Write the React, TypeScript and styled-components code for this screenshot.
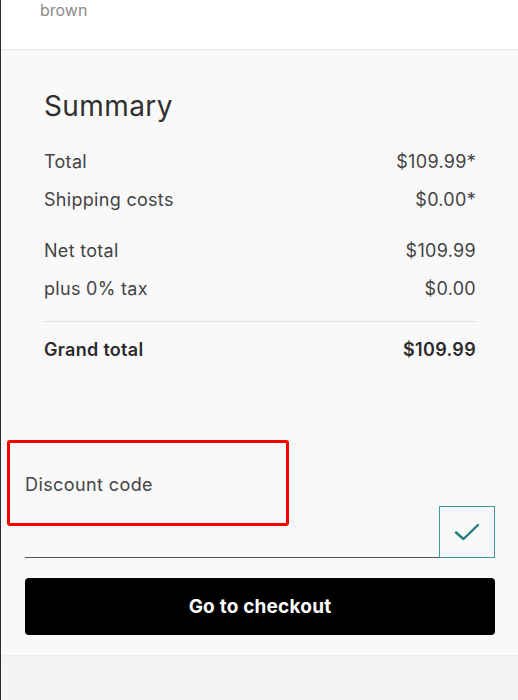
import React from 'react';
import styled, { createGlobalStyle } from 'styled-components';

const GlobalStyle = createGlobalStyle`
    html, body {
        margin: 0;
        padding: 0;
        background: #f4f4f4;
    }
    body {
        font-family: Inter, "Noto Sans", sans-serif;
        color: #333;
    }
`;

const Page = styled.div`
    width: 518px;
    min-height: 700px;
    box-sizing: border-box;
    border-left: 1px solid #2e2e2e;
    background: #f4f4f4;
`;

const ItemTail = styled.div`
    height: 49px;
    background: #fff;
    border-bottom: 1px solid #e6e6e6;
    padding-left: 39px;
    font-size: 16px;
    line-height: 20px;
    color: #8a8a8a;
`;

const Panel = styled.section`
    background: #f9f9f9;
    box-shadow: 0 1px 2px rgba(0, 0, 0, 0.05);
`;

const Summary = styled.div`
    padding: 40px 42px 0 43px;
`;

const Heading = styled.h2`
    margin: 0 0 21px;
    font-size: 28px;
    line-height: 32px;
    font-weight: 400;
    letter-spacing: 0.4px;
    color: #2f2f2f;
`;

const Group = styled.div<{ $gap?: number }>`
    margin-top: ${(p) => p.$gap ?? 0}px;
`;

const Row = styled.div<{ $bold?: boolean }>`
    display: flex;
    justify-content: space-between;
    font-size: 18px;
    line-height: 38px;
    letter-spacing: 0.3px;
    font-weight: ${(p) => (p.$bold ? 600 : 400)};
    color: ${(p) => (p.$bold ? '#2a2a2a' : '#444')};
`;

const Divider = styled.hr`
    margin: 13px 0 9px;
    border: 0;
    border-top: 1px solid #e2e2e2;
`;

const Discount = styled.div`
    position: relative;
    padding: 104px 23px 20px 24px;
`;

const Highlight = styled.div`
    position: absolute;
    left: 6px;
    top: 71px;
    width: 276px;
    height: 80px;
    border: 3px solid #f00;
    border-radius: 3px;
`;

const Label = styled.label`
    display: block;
    font-size: 18px;
    line-height: 24px;
    letter-spacing: 0.4px;
    color: #444;
    margin-bottom: 9px;
`;

const InputRow = styled.div`
    display: flex;
    height: 52px;
`;

const CodeInput = styled.input`
    flex: 1;
    min-width: 0;
    border: 0;
    border-bottom: 1.5px solid #555;
    background: transparent;
    outline: none;
    font: inherit;
`;

const ApplyButton = styled.button`
    width: 56px;
    height: 52px;
    box-sizing: border-box;
    border: 1.5px solid #3a9b96;
    background: transparent;
    display: flex;
    align-items: center;
    justify-content: center;
    padding: 0;
    color: #1f7c78;
`;

const CheckoutButton = styled.button`
    display: block;
    width: 100%;
    height: 57px;
    margin-top: 20px;
    border: 0;
    border-radius: 4px;
    background: #000;
    color: #fff;
    font-family: Inter, "Noto Sans", sans-serif;
    font-size: 19px;
    font-weight: 700;
    letter-spacing: 0.2px;
`;

const Check = () => (
    <svg width="26" height="20" viewBox="0 0 26 20" fill="none">
        <path d="M2 10.5 L9.5 17 L24 3" stroke="currentColor" strokeWidth="2.4" strokeLinecap="round" strokeLinejoin="round" />
    </svg>
);

export default function App() {
    return (
        <Page>
            <GlobalStyle />
            <ItemTail>brown</ItemTail>
            <Panel>
                <Summary>
                    <Heading>Summary</Heading>
                    <Group>
                        <Row><span>Total</span><span>$109.99*</span></Row>
                        <Row><span>Shipping costs</span><span>$0.00*</span></Row>
                    </Group>
                    <Group $gap={13}>
                        <Row><span>Net total</span><span>$109.99</span></Row>
                        <Row><span>plus 0% tax</span><span>$0.00</span></Row>
                    </Group>
                    <Divider />
                    <Row $bold><span>Grand total</span><span>$109.99</span></Row>
                </Summary>
                <Discount>
                    <Highlight />
                    <Label htmlFor="code">Discount code</Label>
                    <InputRow>
                        <CodeInput id="code" />
                        <ApplyButton aria-label="Apply">
                            <Check />
                        </ApplyButton>
                    </InputRow>
                    <CheckoutButton>Go to checkout</CheckoutButton>
                </Discount>
            </Panel>
        </Page>
    );
}
